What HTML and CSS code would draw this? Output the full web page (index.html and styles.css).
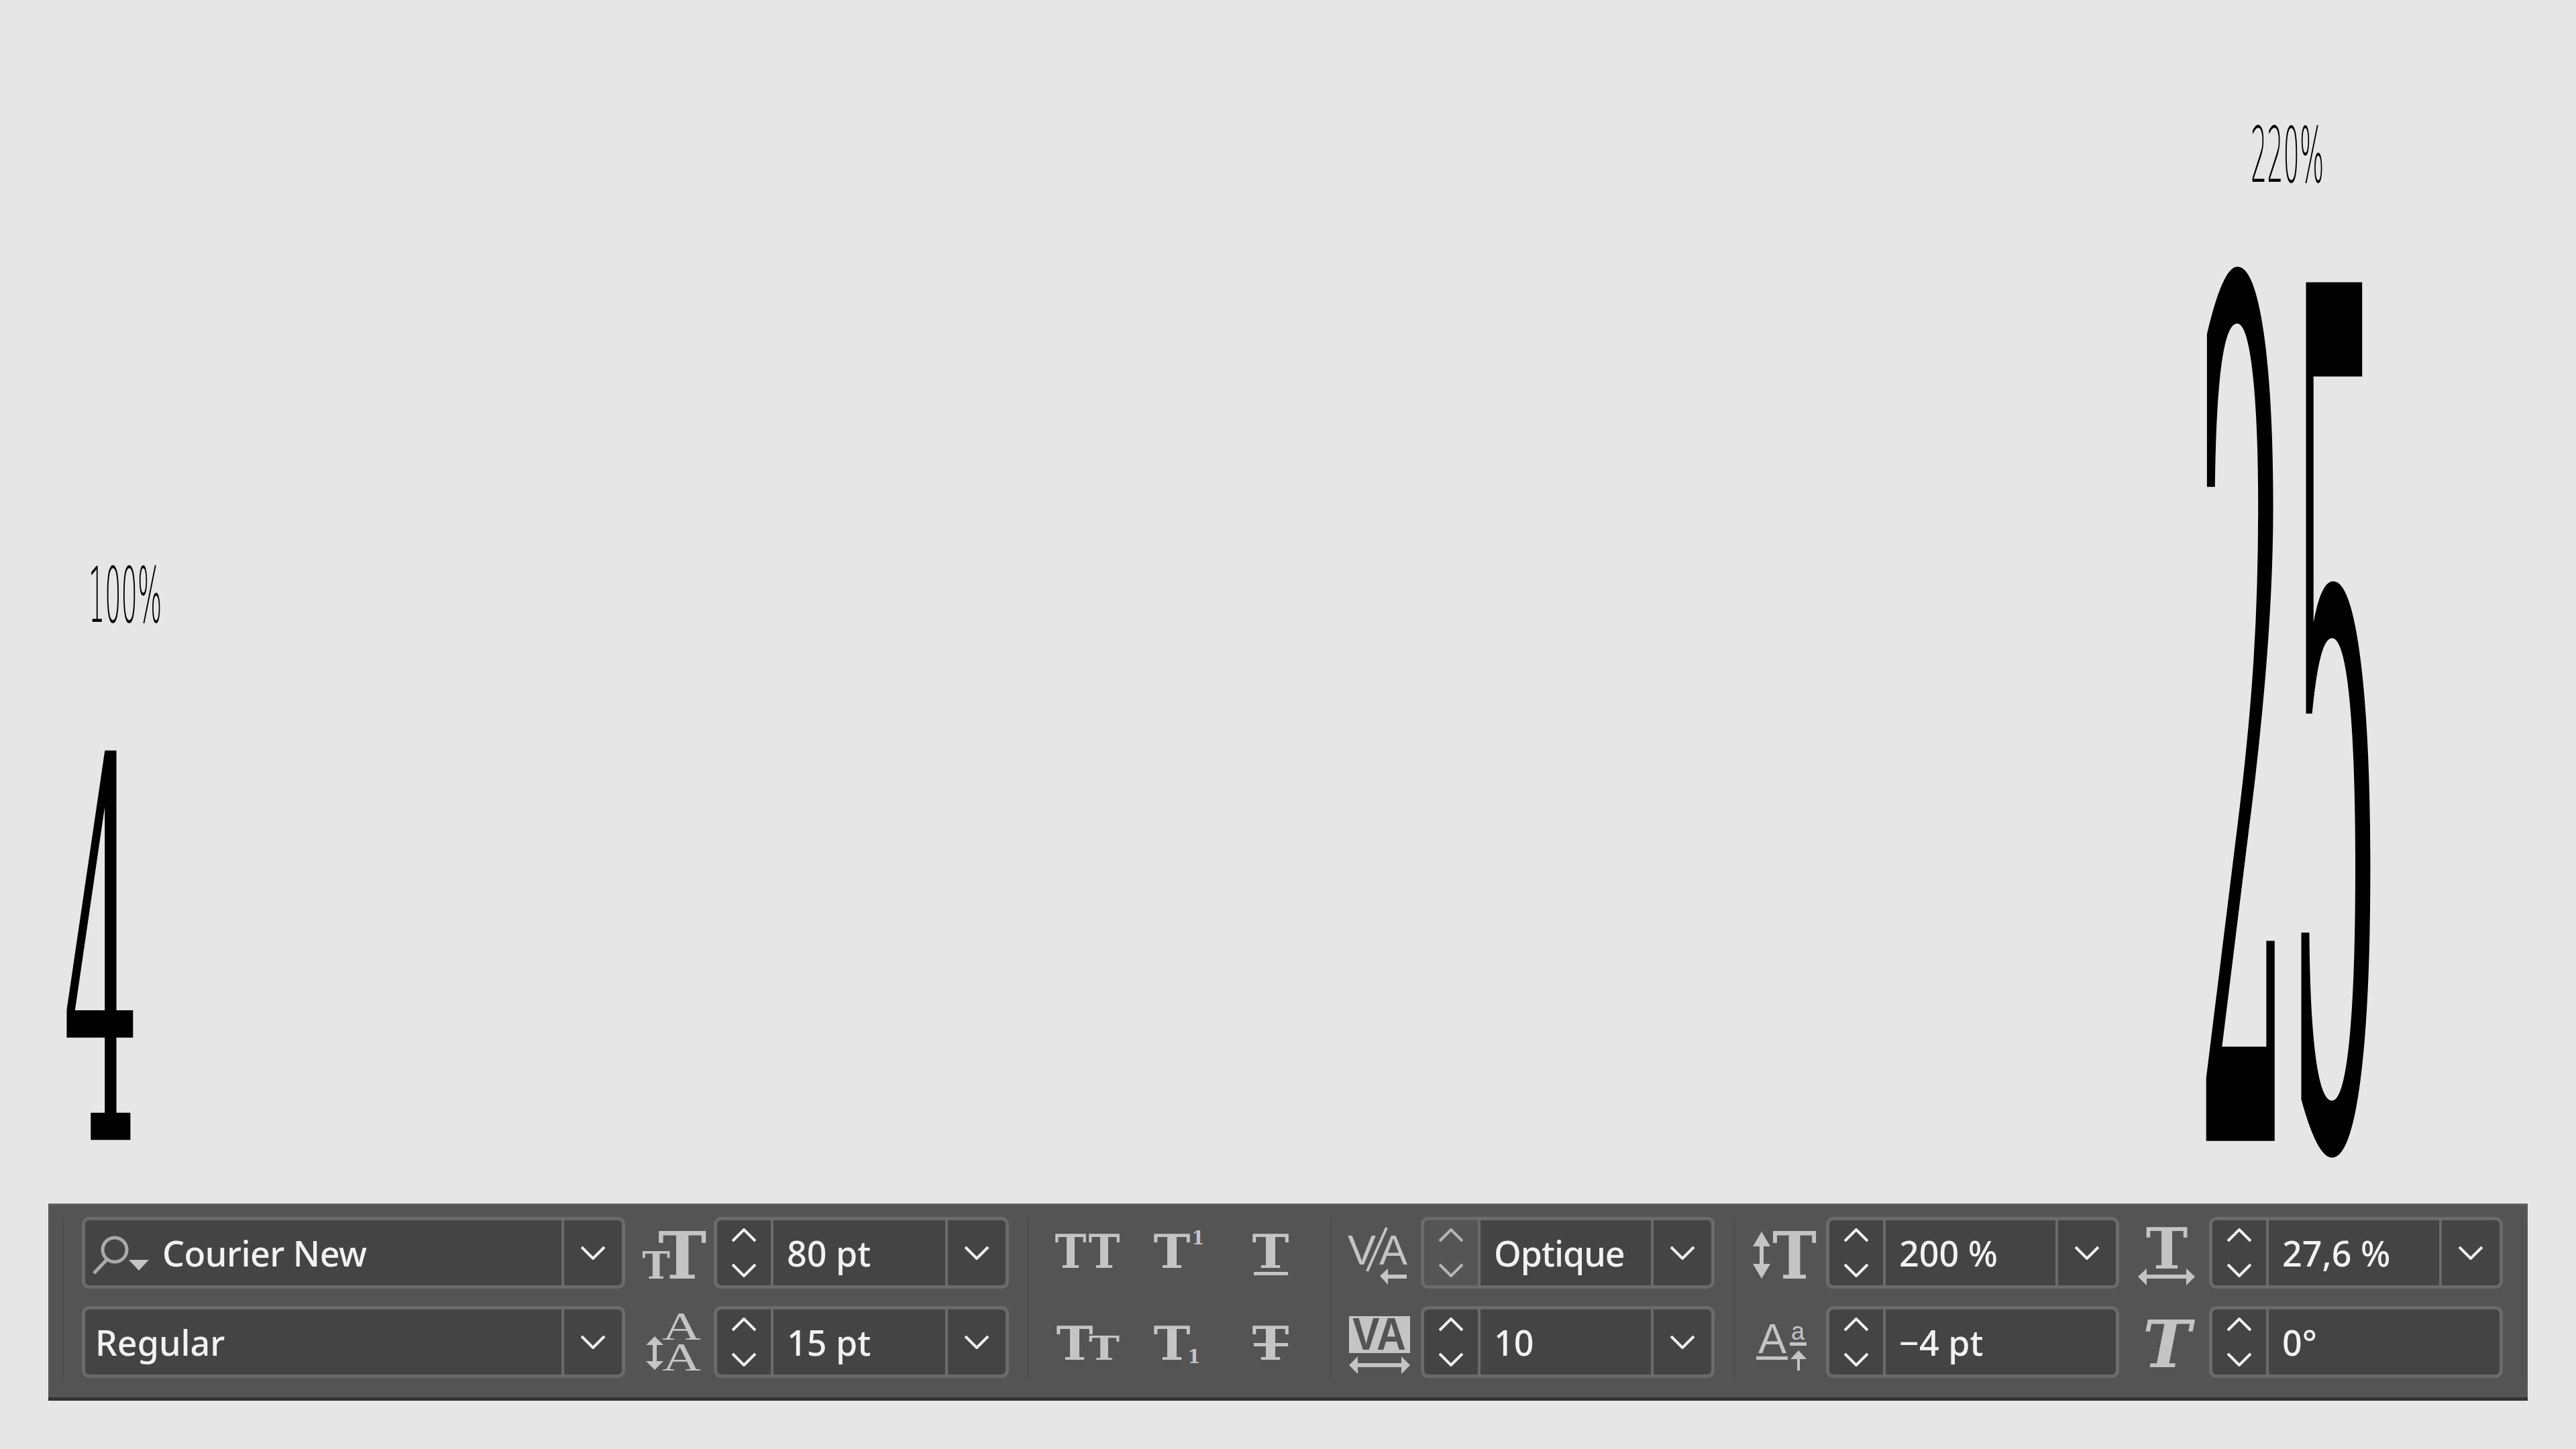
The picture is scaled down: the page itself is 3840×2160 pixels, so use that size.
FILE: index.html
```html
<!DOCTYPE html>
<html lang="fr">
<head>
  <meta charset="UTF-8">
  <title>Caractere</title>
  <link rel="stylesheet" href="styles.css">
</head>
<body>
  <svg class="defs" width="0" height="0">
    <symbol id="chev-down" viewBox="0 0 38 21"><polyline points="2,2 19,19 36,2"/></symbol>
    <symbol id="chev-up" viewBox="0 0 38 21"><polyline points="2,19 19,2 36,19"/></symbol>
  </svg>

  <div class="stage">
    <div class="label label-100">100%</div>
    <div class="glyph glyph-4">4</div>
    <div class="label label-220">220%</div>
    <div class="glyph glyph-25">25</div>
  </div>

  <div class="toolbar">
    <div class="sep"></div>

    <div class="group group-font">
      <div class="field">
        <svg class="search" viewBox="0 0 100 60">
          <circle cx="35" cy="23" r="18"/>
          <line x1="23" y1="38" x2="4" y2="58"/>
          <polygon class="solid" points="56,38 86,38 71,54"/>
        </svg>
        <div class="value value-font">Courier New</div>
        <div class="drop"><svg class="chev"><use href="#chev-down"/></svg></div>
      </div>
      <svg class="icon" viewBox="0 0 132 107">
        <text class="serif" x="46" y="92" font-size="56">T</text>
        <text class="serif" x="85" y="92" font-size="97">T</text>
      </svg>
      <div class="field">
        <div class="step"><svg class="chev"><use href="#chev-up"/></svg><svg class="chev"><use href="#chev-down"/></svg></div>
        <div class="value">80 pt</div>
        <div class="drop"><svg class="chev"><use href="#chev-down"/></svg></div>
      </div>

      <div class="field">
        <div class="value value-style">Regular</div>
        <div class="drop"><svg class="chev"><use href="#chev-down"/></svg></div>
      </div>
      <svg class="icon" viewBox="0 0 132 107">
        <text class="serif-thin" x="84" y="50" font-size="60" textLength="58" lengthAdjust="spacingAndGlyphs">A</text>
        <text class="serif-thin" x="84" y="96" font-size="60" textLength="58" lengthAdjust="spacingAndGlyphs">A</text>
        <path class="arrow" d="M44 45l13 13h-10v24h10l-13 13l-13-13h10v-24h-10z"/>
      </svg>
      <div class="field">
        <div class="step"><svg class="chev"><use href="#chev-up"/></svg><svg class="chev"><use href="#chev-down"/></svg></div>
        <div class="value">15 pt</div>
        <div class="drop"><svg class="chev"><use href="#chev-down"/></svg></div>
      </div>
    </div>

    <div class="sep sep-a"></div>

    <div class="toggles">
      <svg class="toggle" viewBox="0 0 136 107">
        <text class="serif" x="42" y="76" font-size="69" textLength="47" lengthAdjust="spacingAndGlyphs">T</text>
        <text class="serif" x="92" y="76" font-size="69" textLength="47" lengthAdjust="spacingAndGlyphs">T</text>
      </svg>
      <svg class="toggle" viewBox="0 0 136 107">
        <text class="serif" x="57" y="76" font-size="69" textLength="55" lengthAdjust="spacingAndGlyphs">T</text>
        <text class="serif" x="96" y="41" font-size="27">1</text>
      </svg>
      <svg class="toggle" viewBox="0 0 136 107">
        <text class="serif" x="68" y="76" font-size="69" textLength="55" lengthAdjust="spacingAndGlyphs">T</text>
        <rect class="solid" x="43" y="82" width="51" height="5"/>
      </svg>
      <svg class="toggle" viewBox="0 0 136 107">
        <text class="serif" x="48" y="80" font-size="69" textLength="55" lengthAdjust="spacingAndGlyphs">T</text>
        <text class="serif" x="92" y="80" font-size="48" textLength="46" lengthAdjust="spacingAndGlyphs">T</text>
      </svg>
      <svg class="toggle" viewBox="0 0 136 107">
        <text class="serif" x="57" y="80" font-size="69" textLength="55" lengthAdjust="spacingAndGlyphs">T</text>
        <text class="serif" x="90" y="85" font-size="27">1</text>
      </svg>
      <svg class="toggle" viewBox="0 0 136 107">
        <text class="serif" x="68" y="80" font-size="69" textLength="55" lengthAdjust="spacingAndGlyphs">T</text>
        <rect class="solid" x="43" y="55" width="51" height="5"/>
      </svg>
    </div>

    <div class="sep sep-c"></div>

    <div class="group group-kern">
      <svg class="icon" viewBox="0 0 133 107">
        <text class="sans" x="45" y="71" font-size="63">V</text>
        <text class="sans" x="92" y="71" font-size="63">A</text>
        <line class="slash" x1="82" y1="16" x2="53" y2="81"/>
        <path class="arrow" d="M72 88l12-11v9h28v6h-28v9z"/>
      </svg>
      <div class="field">
        <div class="step step-off"><svg class="chev"><use href="#chev-up"/></svg><svg class="chev"><use href="#chev-down"/></svg></div>
        <div class="value value-tight">Optique</div>
        <div class="drop"><svg class="chev"><use href="#chev-down"/></svg></div>
      </div>

      <svg class="icon" viewBox="0 0 133 107">
        <rect class="solid" x="26" y="15" width="91" height="55"/>
        <text class="kern-va" x="71" y="65" font-size="68" textLength="80" lengthAdjust="spacingAndGlyphs">VA</text>
        <path class="arrow" d="M26 88l13-13v10h65v-10l13 13l-13 13v-10h-65v10z"/>
      </svg>
      <div class="field">
        <div class="step"><svg class="chev"><use href="#chev-up"/></svg><svg class="chev"><use href="#chev-down"/></svg></div>
        <div class="value">10</div>
        <div class="drop"><svg class="chev"><use href="#chev-down"/></svg></div>
      </div>
    </div>

    <div class="sep sep-b"></div>

    <div class="group group-scale">
      <svg class="icon" viewBox="0 0 136 107">
        <path class="arrow" d="M40 22l13 22h-10v26h10l-13 22l-13-22h10v-26h-10z"/>
        <text class="serif" x="89" y="92" font-size="97" textLength="66" lengthAdjust="spacingAndGlyphs">T</text>
      </svg>
      <div class="field">
        <div class="step"><svg class="chev"><use href="#chev-up"/></svg><svg class="chev"><use href="#chev-down"/></svg></div>
        <div class="value">200 %</div>
        <div class="drop"><svg class="chev"><use href="#chev-down"/></svg></div>
      </div>
      <svg class="icon" viewBox="0 0 134 107">
        <text class="serif" x="71" y="77" font-size="84">T</text>
        <path class="arrow" d="M28 89l13-12v9h59v-9l13 12l-13 13v-10h-59v10z"/>
      </svg>
      <div class="field">
        <div class="step"><svg class="chev"><use href="#chev-up"/></svg><svg class="chev"><use href="#chev-down"/></svg></div>
        <div class="value">27,6 %</div>
        <div class="drop"><svg class="chev"><use href="#chev-down"/></svg></div>
      </div>

      <svg class="icon" viewBox="0 0 136 107">
        <text class="sans" x="56" y="70" font-size="63">A</text>
        <rect class="solid" x="32" y="75" width="47" height="5"/>
        <text class="sans" x="94" y="50" font-size="36">a</text>
        <rect class="solid" x="82" y="54" width="25" height="5"/>
        <path class="arrow" d="M95 66l12 13h-10v17h-4v-17h-10z"/>
      </svg>
      <div class="field">
        <div class="step"><svg class="chev"><use href="#chev-up"/></svg><svg class="chev"><use href="#chev-down"/></svg></div>
        <div class="value">−4 pt</div>
      </div>
      <svg class="icon" viewBox="0 0 134 107">
        <text class="serif serif-italic" x="71" y="91" font-size="97">T</text>
      </svg>
      <div class="field">
        <div class="step"><svg class="chev"><use href="#chev-up"/></svg><svg class="chev"><use href="#chev-down"/></svg></div>
        <div class="value">0°</div>
      </div>
    </div>

    <div class="sep sep-b"></div>
  </div>
</body>
</html>
```

FILE: styles.css
```css
* {margin:0; padding:0; box-sizing:border-box;}
html, body {width:3840px; height:2160px; overflow:hidden;}
body {
  background:#e6e6e6;
  font-family:"Noto Sans","Liberation Sans",sans-serif;
}
.defs {position:absolute;}

/* specimen on the canvas */
.stage {position:relative; height:1794px;}
.label, .glyph {position:absolute; transform-origin:0 0; white-space:nowrap; color:#000;}
.label {font-family:"DejaVu Sans",sans-serif; font-weight:200; font-size:114px; line-height:1;}
.label-100 {left:132px; top:831px; transform:scaleX(.335);}
.label-220 {left:3355px; top:175px; transform:scaleX(.335);}
.glyph {font-family:"DejaVu Serif",serif; font-size:100px; line-height:74px;}
.glyph-4 {left:94px; top:1144px; transform:scale(1.78,7.82);}
.glyph-25 {left:3274px; top:454px; transform:scale(2.17,17.56);}

/* toolbar */
.toolbar {
  display:flex;
  width:3696px;
  height:294px;
  margin-left:72px;
  padding:18px 0 0 21px;
  background:#545454;
  border-top:2px solid #686868;
  border-bottom:5px solid #333;
}
.sep {width:2px; height:239px; margin-right:27px; background:#4b4b4b;}
.sep-a {margin:0 0 0 27px;}
.sep-b {margin:0 0 0 28px;}
.sep-c {margin:0;}

.group {display:grid; grid-template-rows:107px 107px; row-gap:26px;}
.group-font {grid-template-columns:810px 132px 440px;}
.group-kern {grid-template-columns:133px 438px;}
.group-scale {grid-template-columns:136px 437px 134px 438px;}

.field {
  display:flex;
  height:107px;
  background:#444;
  border:5px solid #6b6b6b;
  border-radius:11px;
  overflow:hidden;
}
.value {
  flex:1;
  display:flex;
  align-items:center;
  padding-left:20px;
  color:#f2f2f2;
  font-size:52px;
  font-weight:500;
}
.value-font {padding-left:6px; letter-spacing:-.5px;}
.value-style {padding-left:15px;}
.value-tight {letter-spacing:-1px;}
.step {
  width:84px;
  display:flex;
  flex-direction:column;
  align-items:center;
  justify-content:center;
  gap:31px;
  border-right:4px solid #6b6b6b;
}
.step-off {background:#555;}
.step-off .chev {stroke:#b5b5b5;}
.drop {
  width:90px;
  display:flex;
  align-items:center;
  justify-content:center;
  border-left:4px solid #6b6b6b;
}
.chev {width:38px; height:21px; fill:none; stroke:#f0f0f0; stroke-width:4;}
.search {width:100px; height:60px; margin:21px 0 0 9px; fill:none; stroke:#aaa; stroke-width:5;}
.search .solid {stroke:none;}

/* icons */
.icon, .toggle {display:block; width:100%; height:107px; overflow:visible;}
.solid, .arrow {fill:#c4c4c4;}
.serif, .serif-thin, .sans, .kern-va {text-anchor:middle; fill:#c4c4c4;}
.serif {font-family:"DejaVu Serif",serif; font-weight:700;}
.serif-thin {font-family:"Liberation Serif",serif;}
.serif-italic {font-style:italic;}
.sans {font-family:"Liberation Sans",sans-serif;}
.kern-va {font-family:"Liberation Sans",sans-serif; font-weight:700; fill:#545454;}
.slash {stroke:#c4c4c4; stroke-width:4;}

.toggles {
  display:grid;
  grid-template-columns:repeat(3,136px);
  grid-template-rows:107px 107px;
  row-gap:26px;
  margin:0 21px;
}
```
